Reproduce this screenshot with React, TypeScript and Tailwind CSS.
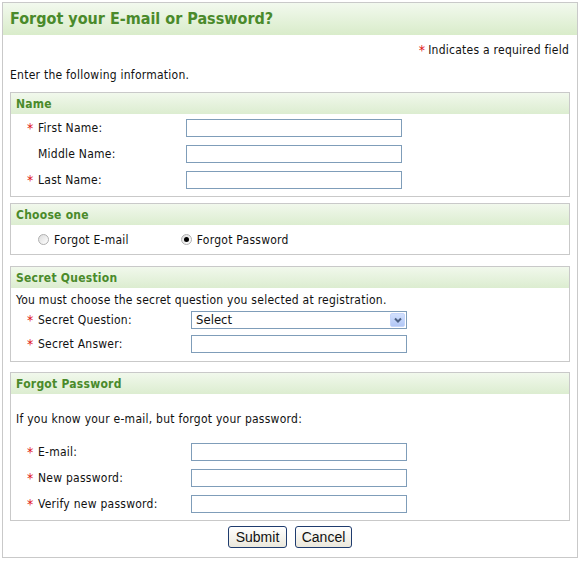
import { ReactNode } from 'react';

const font = { fontFamily: '"DejaVu Sans Condensed", "DejaVu Sans", sans-serif' };

function Star() {
  return <span className="text-[#e01010] text-[14px] leading-none w-[11px] inline-block">*</span>;
}

function Section({ title, children }: { title: string; children: ReactNode }) {
  return (
    <div className="border border-[#c9c9c9] bg-white">
      <div className="h-[21px] flex items-center px-[5px] bg-gradient-to-b from-[#f1f8ec] to-[#dcedd0] text-[#4a8a2b] font-bold text-[12px]">
        {title}
      </div>
      {children}
    </div>
  );
}

function Field({ label, required, wide }: { label: string; required?: boolean; wide?: boolean }) {
  return (
    <div className="flex items-center h-[18px]">
      <div className={wide ? 'w-[180px] flex items-center pl-[16px]' : 'w-[175px] flex items-center pl-[16px]'}>
        {required ? <Star /> : <span className="w-[11px] inline-block" />}
        <span>{label}</span>
      </div>
      <div className="w-[216px] h-[18px] border border-[#7f9db9] bg-white" />
    </div>
  );
}

function Radio({ checked, label }: { checked?: boolean; label: string }) {
  return (
    <div className="flex items-center">
      <span className="w-[11px] h-[11px] rounded-full border border-[#b0b0b0] bg-gradient-to-br from-[#dcdcdc] to-white flex items-center justify-center mr-[5px]">
        {checked && <span className="w-[5px] h-[5px] rounded-full bg-black" />}
      </span>
      <span>{label}</span>
    </div>
  );
}

export default function App() {
  return (
    <div className="w-[581px] h-[561px] bg-white pt-[2px] pl-[2px] text-[12px] tracking-[0.25px] text-[#111]" style={font}>
      <div className="w-[576px] h-[556px] border border-[#c9c9c9]">
        {/* header */}
        <div className="h-[32px] flex items-center px-[7px] bg-gradient-to-b from-[#f2f9ee] to-[#d9ecca] text-[#4a8a2b] font-bold text-[16px] tracking-normal">
          Forgot your E-mail or Password?
        </div>

        <div className="px-[7px]">
          <div className="mt-[7px] h-[16px] flex items-center justify-end pr-[1px]">
            <span className="text-[#e01010] text-[14px] leading-none mr-[3px]">*</span>
            <span>Indicates a required field</span>
          </div>
          <div className="mt-[9px] h-[16px] flex items-center">Enter the following information.</div>

          <div className="mt-[9px]">
            <Section title="Name">
              <div className="flex flex-col gap-[8px] pt-[5px] pb-[7px]">
                <Field label="First Name:" required />
                <Field label="Middle Name:" />
                <Field label="Last Name:" required />
              </div>
            </Section>
          </div>

          <div className="mt-[6px]">
            <Section title="Choose one">
              <div className="h-[29px] flex items-center pl-[27px] gap-[52px]">
                <Radio label="Forgot E-mail" />
                <Radio checked label="Forgot Password" />
              </div>
            </Section>
          </div>

          <div className="mt-[11px]">
            <Section title="Secret Question">
              <div className="h-[23px] flex items-center px-[5px]">
                You must choose the secret question you selected at registration.
              </div>
              <div className="flex flex-col gap-[6px] pb-[8px]">
                <div className="flex items-center h-[18px]">
                  <div className="w-[180px] flex items-center pl-[16px]">
                    <Star />
                    <span>Secret Question:</span>
                  </div>
                  <div className="w-[216px] h-[18px] border border-[#7f9db9] bg-white flex items-center justify-between pl-[4px] pr-[1px]">
                    <span className="text-[13px] tracking-normal">Select</span>
                    <span className="w-[15px] h-[14px] rounded-[2px] bg-gradient-to-b from-[#d2e0fd] to-[#b2c7f5] border border-[#c5d5fa] flex items-center justify-center">
                      <svg width="8" height="6" viewBox="0 0 8 6">
                        <path d="M1 1.5 L4 4.5 L7 1.5" fill="none" stroke="#4d6185" strokeWidth="2" />
                      </svg>
                    </span>
                  </div>
                </div>
                <Field label="Secret Answer:" required wide />
              </div>
            </Section>
          </div>

          <div className="mt-[10px]">
            <Section title="Forgot Password">
              <div className="h-[49px] flex items-center px-[5px] pt-[1px]">
                If you know your e-mail, but forgot your password:
              </div>
              <div className="flex flex-col gap-[8px] pb-[7px]">
                <Field label="E-mail:" required wide />
                <Field label="New password:" required wide />
                <Field label="Verify new password:" required wide />
              </div>
            </Section>
          </div>

          <div className="mt-[5px] flex justify-center gap-[8px] tracking-normal" style={{ fontFamily: '"Liberation Sans", Arial, sans-serif' }}>
            <button className="w-[59px] h-[22px] rounded-[3px] border border-[#1f3c6e] bg-gradient-to-b from-white to-[#ebe8dc] text-[14px] text-[#111]">
              Submit
            </button>
            <button className="w-[57px] h-[22px] rounded-[3px] border border-[#1f3c6e] bg-gradient-to-b from-white to-[#ebe8dc] text-[14px] text-[#111]">
              Cancel
            </button>
          </div>
        </div>
      </div>
    </div>
  );
}
